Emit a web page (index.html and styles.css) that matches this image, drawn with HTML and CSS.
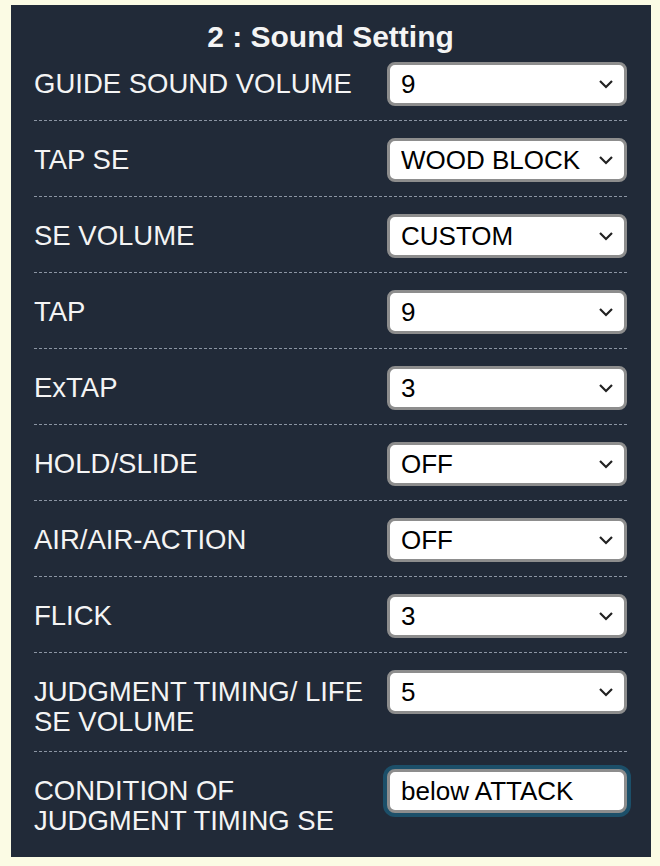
FILE: index.html
```html
<!DOCTYPE html>
<html lang="en">

<head>
    <meta charset="UTF-8">
    <meta name="viewport" content="width=device-width, initial-scale=1.0">
    <title>Sound Setting</title>
    <link rel="stylesheet" href="styles.css">
</head>

<body>
    <div class="panel">
        <h2 class="title">2 : Sound Setting</h2>

        <div class="row">
            <label class="label">GUIDE SOUND VOLUME</label>
            <div class="select-wrap">
                <select class="select"><option>9</option></select>
                <svg class="chevron" viewBox="0 0 16 10"><path d="M2 2 L8 8 L14 2" /></svg>
            </div>
        </div>

        <div class="row">
            <label class="label">TAP SE</label>
            <div class="select-wrap">
                <select class="select"><option>WOOD BLOCK</option></select>
                <svg class="chevron" viewBox="0 0 16 10"><path d="M2 2 L8 8 L14 2" /></svg>
            </div>
        </div>

        <div class="row">
            <label class="label">SE VOLUME</label>
            <div class="select-wrap">
                <select class="select"><option>CUSTOM</option></select>
                <svg class="chevron" viewBox="0 0 16 10"><path d="M2 2 L8 8 L14 2" /></svg>
            </div>
        </div>

        <div class="row">
            <label class="label">TAP</label>
            <div class="select-wrap">
                <select class="select"><option>9</option></select>
                <svg class="chevron" viewBox="0 0 16 10"><path d="M2 2 L8 8 L14 2" /></svg>
            </div>
        </div>

        <div class="row">
            <label class="label">ExTAP</label>
            <div class="select-wrap">
                <select class="select"><option>3</option></select>
                <svg class="chevron" viewBox="0 0 16 10"><path d="M2 2 L8 8 L14 2" /></svg>
            </div>
        </div>

        <div class="row">
            <label class="label">HOLD/SLIDE</label>
            <div class="select-wrap">
                <select class="select"><option>OFF</option></select>
                <svg class="chevron" viewBox="0 0 16 10"><path d="M2 2 L8 8 L14 2" /></svg>
            </div>
        </div>

        <div class="row">
            <label class="label">AIR/AIR-ACTION</label>
            <div class="select-wrap">
                <select class="select"><option>OFF</option></select>
                <svg class="chevron" viewBox="0 0 16 10"><path d="M2 2 L8 8 L14 2" /></svg>
            </div>
        </div>

        <div class="row">
            <label class="label">FLICK</label>
            <div class="select-wrap">
                <select class="select"><option>3</option></select>
                <svg class="chevron" viewBox="0 0 16 10"><path d="M2 2 L8 8 L14 2" /></svg>
            </div>
        </div>

        <div class="row">
            <label class="label">JUDGMENT TIMING/ LIFE SE VOLUME</label>
            <div class="select-wrap">
                <select class="select"><option>5</option></select>
                <svg class="chevron" viewBox="0 0 16 10"><path d="M2 2 L8 8 L14 2" /></svg>
            </div>
        </div>

        <div class="row">
            <label class="label">CONDITION OF JUDGMENT TIMING SE</label>
            <div class="select-wrap">
                <input class="select focused" type="text" value="below ATTACK">
            </div>
        </div>
    </div>
</body>

</html>
```

FILE: styles.css
```css
body {
    margin: 0;
    padding: 5px 9px 9px 11px;
    background-color: #fbfbe4;
    font-family: "Liberation Sans", Arial, sans-serif;
}

.panel {
    width: 640px;
    box-sizing: border-box;
    background-color: #212a38;
    color: #f4f4f4;
    padding: 15px 24px 7px 23px;
}

.title {
    margin: 0;
    font-size: 30px;
    line-height: 34px;
    font-weight: bold;
    text-align: center;
}

.row {
    display: flex;
    align-items: flex-start;
    padding: 17px 0 14px;
    border-bottom: 1px dashed #8c95a3;
}

.row:first-of-type {
    padding-top: 8px;
}

.row:last-child {
    border-bottom: none;
}

.label {
    flex: 1;
    padding: 7px 16px 0 0;
    font-size: 27.5px;
    line-height: 30px;
}

.select-wrap {
    position: relative;
    width: 240px;
    flex-shrink: 0;
}

.select {
    display: block;
    width: 100%;
    height: 44px;
    box-sizing: border-box;
    margin: 0;
    padding: 0 0 0 11px;
    border: 3px solid #8d8d8d;
    border-radius: 8px;
    background-color: #fff;
    color: #000;
    font-family: "Liberation Sans", Arial, sans-serif;
    font-size: 26px;
    -webkit-appearance: none;
    appearance: none;
    outline: none;
}

.chevron {
    position: absolute;
    right: 13px;
    top: 17px;
    width: 16px;
    height: 10px;
    fill: none;
    stroke: #222;
    stroke-width: 2.2;
    pointer-events: none;
}

.focused {
    box-shadow: 0 0 0 4px #1c4f69;
}
```
